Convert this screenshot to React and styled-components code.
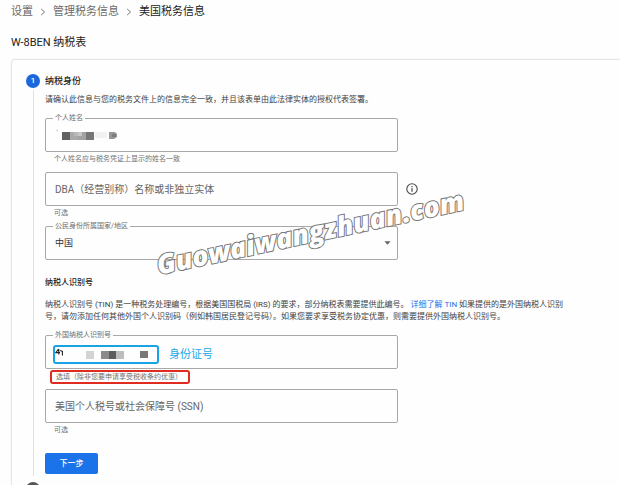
import styled, { createGlobalStyle } from "styled-components";

const GlobalStyle = createGlobalStyle`
  *, *::before, *::after {
    box-sizing: border-box;
  }

  body {
    margin: 0;
    background: #fefefe;
    color: #3c4043;
    font-family: Roboto, "Noto Sans CJK SC", sans-serif;
    font-size: 8px;
    line-height: 12px;
  }

  h1, h2, h3, p {
    margin: 0;
    padding: 0;
  }
`;

const Chevron = () => (
  <ChevronIcon viewBox="0 0 6 8" aria-hidden="true">
    <path d="M1.2 1 L4.6 4 L1.2 7" fill="none" stroke="#777" strokeWidth="1" />
  </ChevronIcon>
);

const InfoIcon = () => (
  <svg width="12" height="12" viewBox="0 0 12 12" aria-hidden="true">
    <circle cx="6" cy="6" r="5.2" fill="none" stroke="#4a4a4a" strokeWidth="1.1" />
    <rect x="5.4" y="5.2" width="1.2" height="3.6" fill="#4a4a4a" />
    <rect x="5.4" y="3.1" width="1.2" height="1.2" fill="#4a4a4a" />
  </svg>
);

const NameMask = () => (
  <svg width="64" height="12" viewBox="0 0 64 12" aria-hidden="true">
    <path d="M1.5 1 L3 2.2" stroke="#999" strokeWidth="0.8" />
    <rect x="7" y="3" width="8" height="8" fill="#626262" />
    <rect x="15" y="3" width="8" height="8" fill="#a9a9a9" />
    <rect x="19" y="3" width="4" height="4" fill="#b8b8b8" />
    <rect x="23" y="3" width="8" height="8" fill="#a2a2a2" />
    <rect x="23" y="3" width="4" height="4" fill="#c6c6c6" />
    <rect x="31" y="3" width="8" height="8" fill="#767676" />
    <rect x="40" y="3" width="12" height="6" fill="#f1f1f1" />
    <path d="M54 3 H60 L62 5 V8 L59 10 H54 Z" fill="#989898" />
    <rect x="57" y="5" width="4" height="3" fill="#7d7d7d" />
  </svg>
);

const TinMask = () => (
  <svg width="98" height="13" viewBox="0 0 98 13" aria-hidden="true">
    <path d="M3.6 1 L0.8 4.6 H5 M3.8 1 V6.6 M5.2 2.6 L7.4 3.4 V7.4" fill="none" stroke="#222" strokeWidth="1.1" />
    <rect x="31" y="3" width="8" height="8" fill="#d3d3d3" />
    <rect x="46" y="3" width="8" height="8" fill="#8b8b8b" />
    <rect x="54" y="3" width="7" height="8" fill="#5d5d5d" />
    <rect x="61" y="3" width="8" height="8" fill="#bdbdbd" />
    <rect x="85" y="3" width="8" height="7" fill="#777" />
  </svg>
);

const Field = ({ id, label, placeholder, helper, marked, children, info }) => (
  <FieldGroup>
    <FieldRow>
      <Outline>
        {label && <FloatingLabel htmlFor={id}>{label}</FloatingLabel>}
        <TextInput
          id={id}
          type="text"
          placeholder={placeholder}
          aria-label={label ? undefined : placeholder}
          aria-describedby={`${id}-helper`}
        />
        {children}
      </Outline>
      {info && (
        <InfoButton type="button" aria-label={info}>
          <InfoIcon />
        </InfoButton>
      )}
    </FieldRow>
    <Helper id={`${id}-helper`} $marked={marked}>{helper}</Helper>
  </FieldGroup>
);

const App = () => {
  return (
    <Page>
      <GlobalStyle />
      <Breadcrumbs aria-label="breadcrumb">
        <Crumb href="#settings">设置</Crumb>
        <Chevron />
        <Crumb href="#tax">管理税务信息</Crumb>
        <Chevron />
        <Crumb href="#us-tax" aria-current="page">美国税务信息</Crumb>
      </Breadcrumbs>
      <PageTitle>W-8BEN 纳税表</PageTitle>

      <Card>
        <Step>
          <StepRail>
            <StepBadge $active>1</StepBadge>
            <StepLine />
          </StepRail>
          <StepBody>
            <StepTitle>纳税身份</StepTitle>
            <Intro>请确认此信息与您的税务文件上的信息完全一致，并且该表单由此法律实体的授权代表签署。</Intro>

            <Field id="name" label="个人姓名" helper="个人姓名应与税务凭证上显示的姓名一致">
              <Overlay><NameMask /></Overlay>
            </Field>
            <Field
              id="dba"
              placeholder="DBA（经营别称）名称或非独立实体"
              helper="可选"
              info="DBA"
            />
            <FieldRow>
              <Outline>
                <FloatingLabel htmlFor="country">公民身份所属国家/地区</FloatingLabel>
                <Select id="country" defaultValue="cn">
                  <option value="cn">中国</option>
                </Select>
                <Caret viewBox="0 0 8 4" aria-hidden="true">
                  <path d="M0.5 0 H7.5 L4 4 Z" fill="#666" />
                </Caret>
              </Outline>
            </FieldRow>

            <SectionTitle>纳税人识别号</SectionTitle>
            <Paragraph>
              纳税人识别号 (TIN) 是一种税务处理编号，根据美国国税局 (IRS) 的要求，部分纳税表需要提供此编号。{" "}
              <a href="#tin">详细了解 TIN</a> 如果提供的是外国纳税人识别号，请勿添加任何其他外国个人识别码（例如韩国居民登记号码）。如果您要求享受税务协定优惠，则需要提供外国纳税人识别号。
            </Paragraph>

            <Field
              id="foreign-tin"
              label="外国纳税人识别号"
              helper="选填（除非您要申请享受税收条约优惠）"
              marked
            >
              <Annotation>
                <BlueFrame><TinMask /></BlueFrame>
                <span>身份证号</span>
              </Annotation>
            </Field>
            <Field id="ssn" placeholder="美国个人税号或社会保障号 (SSN)" helper="可选" />

            <NextButton type="button">下一步</NextButton>
          </StepBody>
        </Step>
        <StepRail>
          <StepBadge />
        </StepRail>
      </Card>
      <Watermark>Guowaiwangzhuan.com</Watermark>
    </Page>
  );
};

export default App;

const Page = styled.main`
  position: relative;
  height: 100vh;
  overflow: hidden;
  padding: 5px 0 0 11px;
`;

const Breadcrumbs = styled.nav`
  display: flex;
  align-items: center;
  gap: 7px;
  height: 14px;
`;

const Crumb = styled.a`
  color: #6b6b6b;
  font-size: 11px;
  line-height: 14px;
  text-decoration: none;

  &[aria-current] {
    color: #222;
  }
`;

const ChevronIcon = styled.svg`
  width: 6px;
  height: 8px;
`;

const PageTitle = styled.h1`
  margin-top: 17px;
  color: #222;
  font-size: 11px;
  font-weight: 400;
  line-height: 14px;
`;

const Card = styled.section`
  margin-top: 9px;
  padding: 14px 0 24px 14px;
  border: 1px solid #e6e6e6;
  border-right: 0;
  border-radius: 4px 0 0 4px;
  box-shadow: 0 0 2px #eee;
`;

const Step = styled.div`
  display: flex;
  gap: 5px;
`;

const StepRail = styled.div`
  display: flex;
  flex-direction: column;
  align-items: center;
  width: 14px;
  flex-shrink: 0;
`;

const StepBadge = styled.span`
  display: grid;
  place-items: center;
  width: 14px;
  height: 14px;
  border-radius: 50%;
  background: ${({ $active }) => ($active ? "#1a68dc" : "#555")};
  color: #fff;
  font-size: 8px;
  font-weight: 500;
`;

const StepLine = styled.span`
  flex: 1;
  width: 1px;
  margin: 2px 0 6px;
  background: #e2e2e2;
`;

const StepBody = styled.div`
  flex: 1;
  min-width: 0;
  padding-bottom: 8px;
`;

const StepTitle = styled.h2`
  color: #222;
  font-size: 9px;
  font-weight: 500;
  line-height: 14px;
`;

const Intro = styled.p`
  margin: 6px 0 12px;
`;

const FieldGroup = styled.div`
  height: 54px;
`;

const FieldRow = styled.div`
  display: flex;
  align-items: center;
  gap: 8px;
`;

const Outline = styled.div`
  position: relative;
  width: 353px;
  max-width: 90%;
  height: 34px;
  border: 1px solid #a8a8a8;
  border-radius: 2px;
`;

const FloatingLabel = styled.label`
  position: absolute;
  top: -7px;
  left: 7px;
  padding: 0 2px;
  background: #fefefe;
  color: #6b6b6b;
  font-size: 7px;
  line-height: 12px;
`;

const TextInput = styled.input`
  display: block;
  width: 100%;
  height: 100%;
  padding: 0 9px;
  border: 0;
  outline: 0;
  background: transparent;
  color: #444;
  font: inherit;
  font-size: 10px;

  &::placeholder {
    color: #666;
    opacity: 1;
  }
`;

const Select = styled.select`
  appearance: none;
  display: block;
  width: 100%;
  height: 100%;
  padding: 0 9px;
  border: 0;
  outline: 0;
  background: transparent;
  color: #333;
  font: inherit;
  font-size: 9px;
`;

const Caret = styled.svg`
  position: absolute;
  top: 14px;
  right: 6px;
  width: 7px;
  height: 4px;
  pointer-events: none;
`;

const Overlay = styled.span`
  position: absolute;
  top: 10px;
  left: 9px;
  line-height: 0;
  pointer-events: none;
`;

const InfoButton = styled.button`
  display: grid;
  padding: 0;
  border: 0;
  background: none;
`;

const Helper = styled.p`
  width: max-content;
  margin: 1px 0 0 5px;
  padding: 0 6px 0 4px;
  border: ${({ $marked }) => ($marked ? "2px solid #e02b20" : "0")};
  border-radius: 3px;
  color: #707070;
  font-size: 7px;
  line-height: ${({ $marked }) => ($marked ? "10px" : "13px")};
`;

const SectionTitle = styled.h3`
  margin: 17px 0 10px;
  color: #222;
  font-size: 8px;
  font-weight: 500;
  line-height: 12px;
`;

const Paragraph = styled.p`
  max-width: 520px;
  margin-bottom: 12px;

  a {
    color: #1a73e8;
    text-decoration: none;
  }
`;

const Annotation = styled.span`
  position: absolute;
  top: 9px;
  left: 7px;
  display: flex;
  align-items: center;
  gap: 10px;
  color: #22a7e8;
  font-size: 11px;
  pointer-events: none;
`;

const BlueFrame = styled.span`
  display: flex;
  align-items: center;
  width: 106px;
  height: 19px;
  border: 2px solid #17a3e6;
  border-radius: 3px;
`;

const NextButton = styled.button`
  display: block;
  width: 53px;
  height: 21px;
  margin-top: 10px;
  padding: 0;
  border: 0;
  border-radius: 2px;
  background: #1a73e8;
  color: #fff;
  font: inherit;
  font-weight: 500;
`;

const Watermark = styled.span`
  position: absolute;
  top: 249px;
  left: 157px;
  color: #fff;
  font-family: "Open Sans", sans-serif;
  font-size: 27px;
  font-style: italic;
  font-weight: 800;
  line-height: 32px;
  transform: rotate(-12deg);
  transform-origin: left center;
  -webkit-text-stroke: 2px #777;
  paint-order: stroke fill;
  pointer-events: none;
`;
